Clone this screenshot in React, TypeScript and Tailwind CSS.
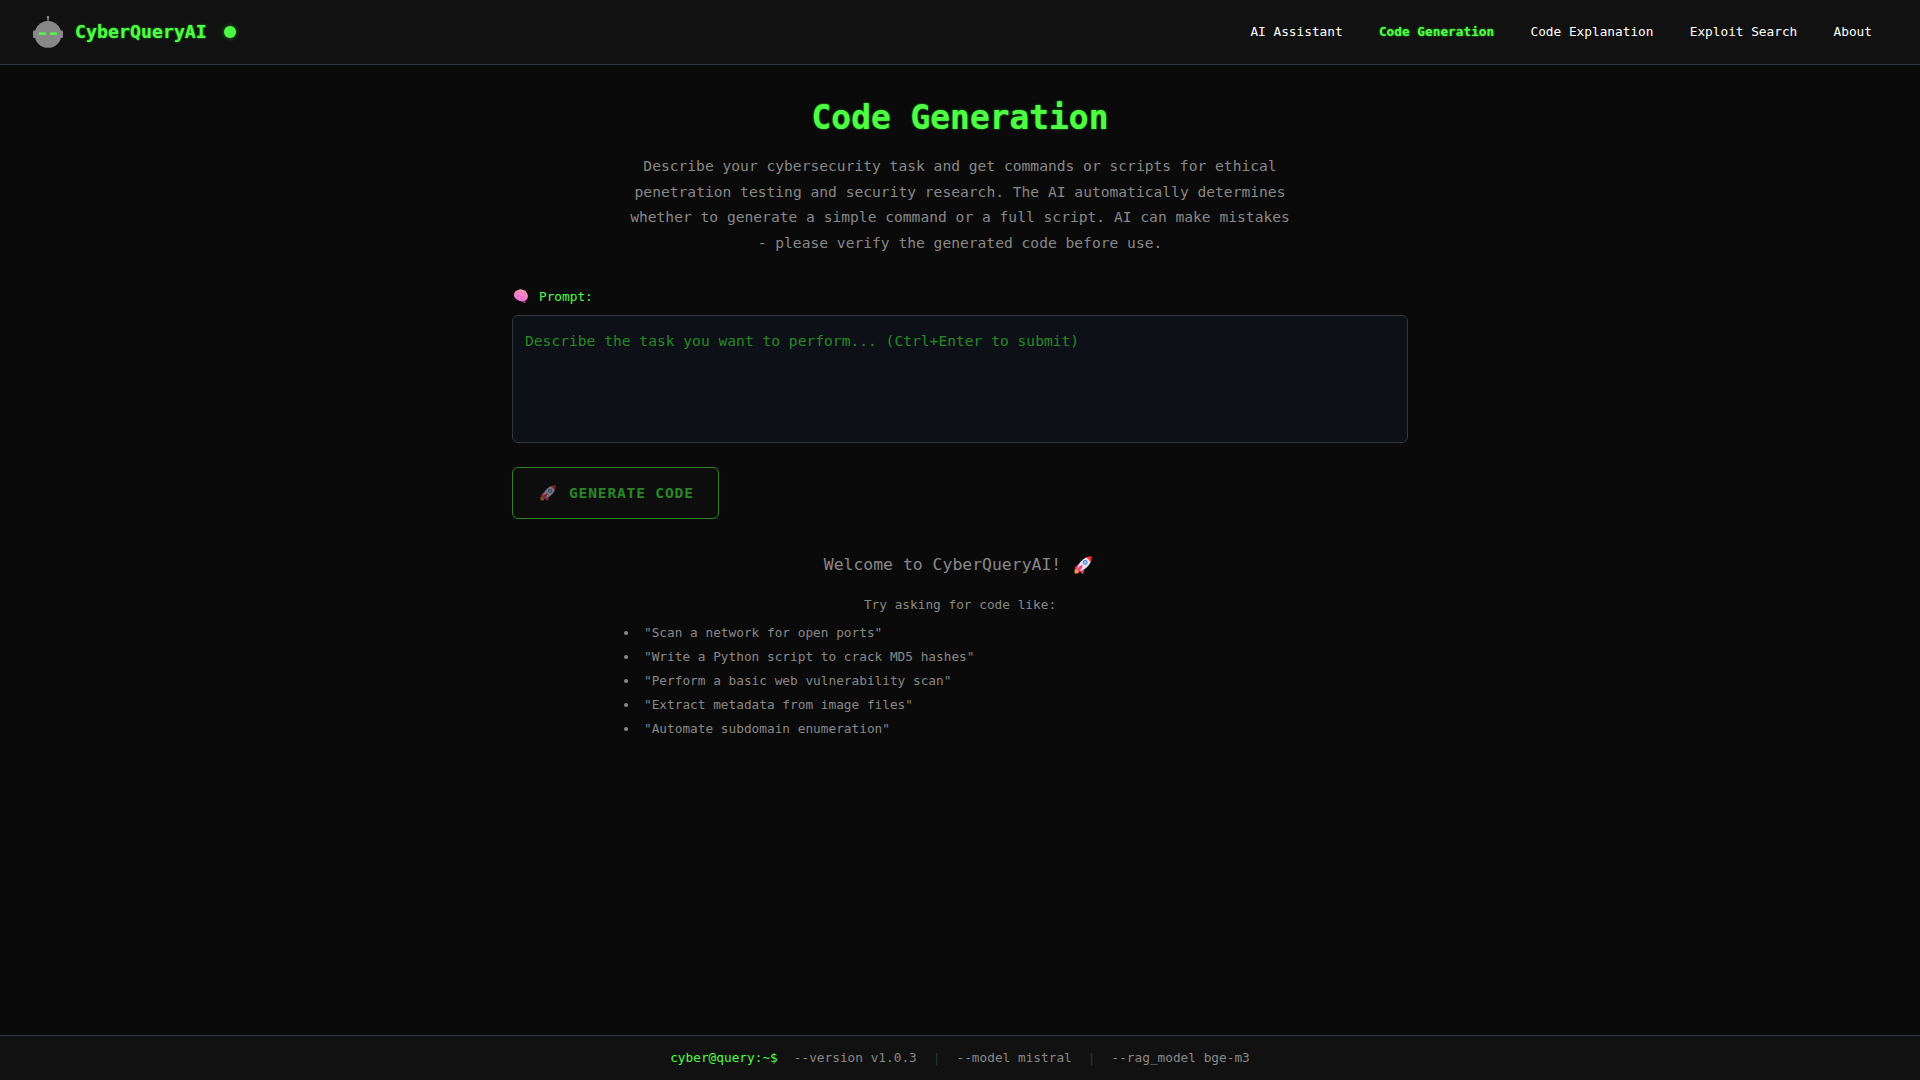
const examples = [
  '"Scan a network for open ports"',
  '"Write a Python script to crack MD5 hashes"',
  '"Perform a basic web vulnerability scan"',
  '"Extract metadata from image files"',
  '"Automate subdomain enumeration"',
];

function Robot() {
  return (
    <svg className="h-8 w-8" viewBox="0 0 32 32" fill="#888">
      <circle cx="16" cy="1.2" r="1.3" />
      <rect x="15.3" y="1.2" width="1.4" height="5" />
      <rect x="1" y="14.5" width="30" height="7.5" rx="1" />
      <circle cx="16" cy="18.4" r="13.4" />
      <rect x="7" y="16.4" width="7" height="2.4" fill="#4cff42" />
      <rect x="18" y="16.4" width="7" height="2.4" fill="#4cff42" />
    </svg>
  );
}

function Rocket({ className }: { className: string }) {
  return (
    <svg className={className} viewBox="0 0 32 32">
      <path d="M10 14 Q4 15 1 22 L8 24 Z M18 22 L17 31 L13 31 L10 25 Z" fill="#e8356d" />
      <path d="M1 24 L6 22 L10 26 L7 31 L1 31 Z" fill="#f59537" />
      <path d="M6 22 Q8 9 22 2 L30 2 L30 10 Q24 23 10 27 Z" fill="#e6e0ec" />
      <path d="M21 2.5 Q27 0 31.5 0.5 Q32 6 29.5 11 Q27 5 21 2.5 Z" fill="#f8312f" />
      <circle cx="20" cy="11.5" r="4.2" fill="#4b7fc4" />
      <circle cx="20" cy="11.5" r="2.6" fill="#8fc7ff" />
      <path d="M5 24 Q9 17 15 16 Q16 21 9 28 Z" fill="#f0457a" />
    </svg>
  );
}

function Brain() {
  return (
    <svg className="h-[14px] w-[14px]" viewBox="0 0 32 32">
      <defs>
        <linearGradient id="brain" x1="0.7" y1="0" x2="0.3" y2="1">
          <stop offset="0" stopColor="#fba0b4" />
          <stop offset="1" stopColor="#f56be0" />
        </linearGradient>
      </defs>
      <path d="M20 24 L27 28 L26 32 L22 32 L17 26 Z" fill="#8d2f6e" />
      <path d="M0 15 Q0 5 8 3 Q14 -1 21 2 Q28 3 30 10 Q34 18 29 24 Q25 29 19 28 Q12 29 9 25 Q1 23 0 15 Z" fill="url(#brain)" />
      <path d="M6 9 Q11 6 14 10 M16 5 Q21 7 20 12 M7 17 Q13 13 17 18 Q21 21 26 17 M13 23 Q17 20 20 24 M24 8 Q27 11 25 14" fill="none" stroke="#dc6cb4" strokeWidth="1.6" />
    </svg>
  );
}

const nav = ["AI Assistant", "Code Generation", "Code Explanation", "Exploit Search", "About"];

export default function App() {
  return (
    <div className="flex h-screen flex-col bg-[#0a0a0a] font-['DejaVu_Sans_Mono',monospace] text-[12.785px] text-[#888]">
      <header className="flex h-[65px] items-center justify-between border-b border-[#30363d] bg-[#111] pr-12 pl-8">
        <div className="flex items-center">
          <Robot />
          <span className="ml-[11px] text-[18.26px] font-bold text-[#4cff42] [text-shadow:0_0_2px_#4cff42b3]">CyberQueryAI</span>
          <span className="ml-[17px] h-3 w-3 rounded-full bg-[#4cff42] shadow-[0_0_4px_#4cff4280]" />
        </div>
        <nav className="flex gap-[36.25px]">
          {nav.map((n) => (
            <a key={n} className={n === "Code Generation" ? "font-bold text-[#4cff42] [text-shadow:0_0_2px_#4cff42b3]" : "text-white"}>{n}</a>
          ))}
        </nav>
      </header>
      <main className="mx-auto flex w-[896px] flex-1 flex-col">
        <h1 className="mt-8 text-center text-[32.88px] leading-[42px] font-bold text-[#4cff42] [text-shadow:0_0_2px_#4cff42b3]">Code Generation</h1>
        <p className="mx-auto mt-[14px] w-[680px] text-center text-[14.61px] leading-[25.6px]">
          Describe your cybersecurity task and get commands or scripts for ethical<br />penetration testing and security research. The AI automatically determines<br />whether to generate a simple command or a full script. AI can make mistakes<br />- please verify the generated code before use.
        </p>
        <label className="mt-[29px] flex h-6 items-center gap-[11px] pl-0.5 text-[#4cff42]"><Brain />Prompt:</label>
        <div className="mt-[7px] h-32 rounded-md border border-[#30363d] bg-[#0d1117] px-3 py-3 text-[14.61px] leading-[25.6px] text-[#268a26]">
          Describe the task you want to perform... (Ctrl+Enter to submit)
        </div>
        <button className="mt-6 flex h-[52px] w-[207px] items-center rounded-md border border-[#4cff42] bg-[#111] pl-[27px] text-[14.61px] font-bold tracking-[0.8px] text-[#4cff42] opacity-50">
          <Rocket className="mr-[13px] h-4 w-4" />GENERATE CODE
        </button>
        <div className="mx-auto mt-8 flex w-[672px] flex-col">
          <div className="flex items-center justify-center pr-1 text-[16.44px] leading-7">Welcome to CyberQueryAI!<Rocket className="ml-[13px] h-[18px] w-[18px]" /></div>
          <p className="mt-[14px] text-center leading-6">Try asking for code like:</p>
          <ul className="mt-1 leading-6">
            {examples.map((e) => (
              <li key={e} className="flex items-center">
                <span className="mr-4 h-1 w-1 rounded-full bg-[#888]" />{e}
              </li>
            ))}
          </ul>
        </div>
      </main>
      <footer className="flex h-[45px] items-center justify-center border-t border-[#30363d] bg-[#111]">
        <span className="text-[#4cff42]">cyber@query:~$</span>
        <span className="ml-4">--version v1.0.3</span>
        <span className="mx-4 text-[#30363d]">|</span>
        <span>--model mistral</span>
        <span className="mx-4 text-[#30363d]">|</span>
        <span>--rag_model bge-m3</span>
      </footer>
    </div>
  );
}
